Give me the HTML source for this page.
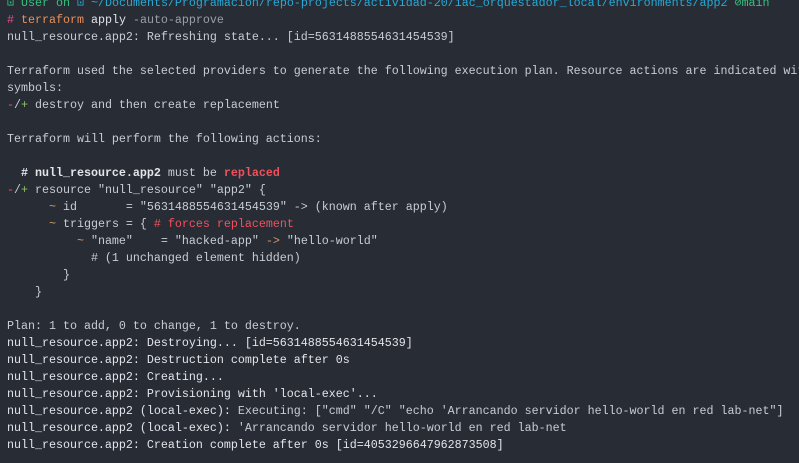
<!DOCTYPE html>
<html><head><meta charset="utf-8"><style>
html,body{margin:0;padding:0;background:#282c34;width:799px;height:463px;overflow:hidden}
pre{margin:0;position:absolute;left:7px;top:-5px;width:792px;overflow:hidden;font-family:"Liberation Mono","DejaVu Sans Mono",monospace;font-size:11.67px;line-height:17px;color:#c8ccd4;white-space:pre}
.g{color:#35c27e}.b{color:#27a9d6}.o{color:#e8915a}.w{color:#dfe2e8}.m{color:#9aa0aa}
.r{color:#f0515e}.rb{color:#f0515e;font-weight:bold}.gr{color:#8cc265}.y{color:#d19a66}.p{color:#e0508a}
.wb{color:#e2e5ea}
</style></head><body><pre><span class="g">⊡ User on</span> <span class="b">⊡ ~/Documents/Programacion/repo-projects/actividad-20/iac_orquestador_local/environments/app2</span> <span class="g">⊘main</span>
<span class="p">#</span> <span class="o">terraform</span> <span class="w">apply</span> <span class="m">-auto-approve</span>
null_resource.app2: Refreshing state... [id=5631488554631454539]

Terraform used the selected providers to generate the following execution plan. Resource actions are indicated with the following
symbols:
<span class="r">-</span>/<span class="gr">+</span> destroy and then create replacement

Terraform will perform the following actions:

  <b class="wb"># null_resource.app2</b> must be <span class="rb">replaced</span>
<span class="r">-</span>/<span class="gr">+</span> resource "null_resource" "app2" {
      <span class="y">~</span> id       = "5631488554631454539" -&gt; (known after apply)
      <span class="y">~</span> triggers = { <span class="r"># forces replacement</span>
          <span class="y">~</span> "name"    = "hacked-app" <span class="y">-&gt;</span> "hello-world"
            # (1 unchanged element hidden)
        }
    }

Plan: 1 to add, 0 to change, 1 to destroy.
<span class="wb">null_resource.app2: Destroying... [id=5631488554631454539]</span>
<span class="wb">null_resource.app2: Destruction complete after 0s</span>
<span class="wb">null_resource.app2: Creating...</span>
<span class="wb">null_resource.app2: Provisioning with 'local-exec'...</span>
<span class="wb">null_resource.app2 (local-exec):</span> Executing: ["cmd" "/C" "echo 'Arrancando servidor hello-world en red lab-net"]
<span class="wb">null_resource.app2 (local-exec):</span> 'Arrancando servidor hello-world en red lab-net
<span class="wb">null_resource.app2: Creation complete after 0s [id=4053296647962873508]</span>
</pre></body></html>
